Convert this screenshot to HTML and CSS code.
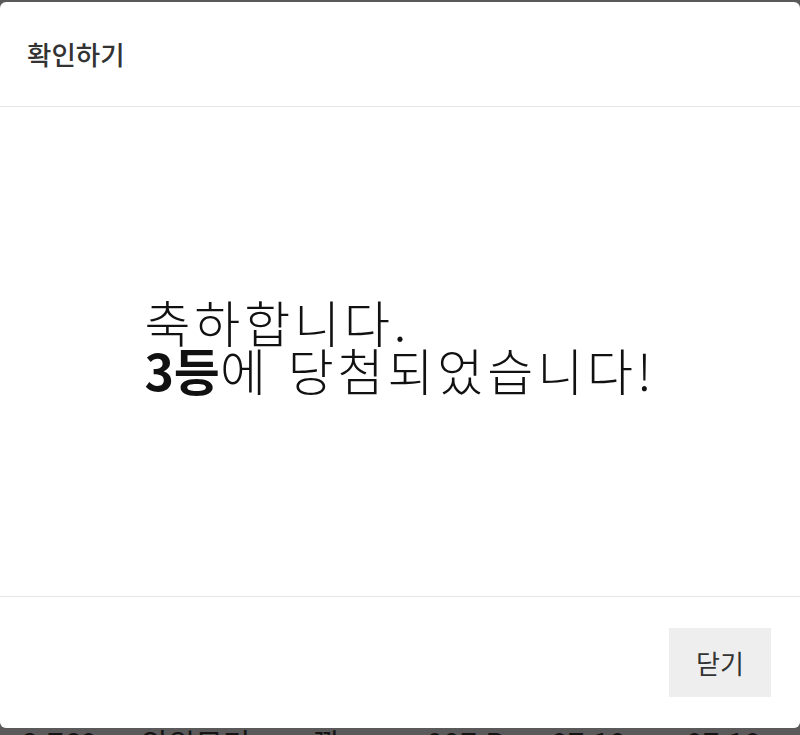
FILE: index.html
```html
<!DOCTYPE html>
<html lang="ko">
<head>
<meta charset="utf-8">
<title>확인하기</title>
<link rel="stylesheet" href="styles.css">
</head>
<body>
<div class="page">
  <div class="row">
    <span class="c1">2,760</span>
    <span class="c2">의위무기</span>
    <span class="c3">깡</span>
    <span class="c4">997 B</span>
    <span class="c5">07.10</span>
    <span class="c6">07.10</span>
  </div>
</div>
<div class="modal">
  <div class="modal-header">확인하기</div>
  <div class="modal-body">
    <div class="message">축하합니다.<br><strong>3등</strong>에 당첨되었습니다!</div>
  </div>
  <div class="modal-footer">
    <button class="btn-close" type="button">닫기</button>
  </div>
</div>
</body>
</html>
```
FILE: styles.css
```css
html, body {
  margin: 0;
  padding: 0;
}
body {
  background: #5a5a5a;
  font-family: "Noto Sans CJK KR", "Noto Sans", sans-serif;
  height: 735px;
  overflow: hidden;
}
.page {
  padding-top: 722px;
}
.row {
  display: flex;
  font-size: 30px;
  line-height: 40px;
  color: #151515;
}
.row span { flex: none; }
.c1 { margin-left: 22px; width: 118px; }
.c2 { width: 173px; }
.c3 { width: 114px; }
.c4 { width: 124px; }
.c5 { width: 135px; }
.c6 { width: 80px; }

.modal {
  position: fixed;
  top: 2px;
  left: 0;
  right: 0;
  height: 726px;
  background: #fff;
  border-radius: 6px;
  display: flex;
  flex-direction: column;
}
.modal-header {
  height: 105px;
  flex: none;
  box-sizing: border-box;
  border-bottom: 1px solid #e5e5e5;
  padding: 0 27px 2px;
  display: flex;
  align-items: center;
  font-size: 26.5px;
  font-weight: 500;
  color: #333;
}
.modal-body {
  flex: 1;
  display: flex;
  align-items: center;
  justify-content: center;
  padding-bottom: 14px;
}
.message {
  font-size: 50px;
  line-height: 48px;
  letter-spacing: 3.9px;
  color: #111;
  font-weight: 300;
  text-align: left;
}
.message strong {
  font-weight: 700;
  letter-spacing: 0;
}
.modal-footer {
  height: 132px;
  flex: none;
  box-sizing: border-box;
  border-top: 1px solid #e5e5e5;
  display: flex;
  align-items: center;
  justify-content: flex-end;
  padding-right: 29px;
}
.btn-close {
  width: 102px;
  height: 69px;
  border: none;
  background: #eeeeee;
  font-family: inherit;
  font-size: 26px;
  color: #333;
  padding: 0;
}
```
